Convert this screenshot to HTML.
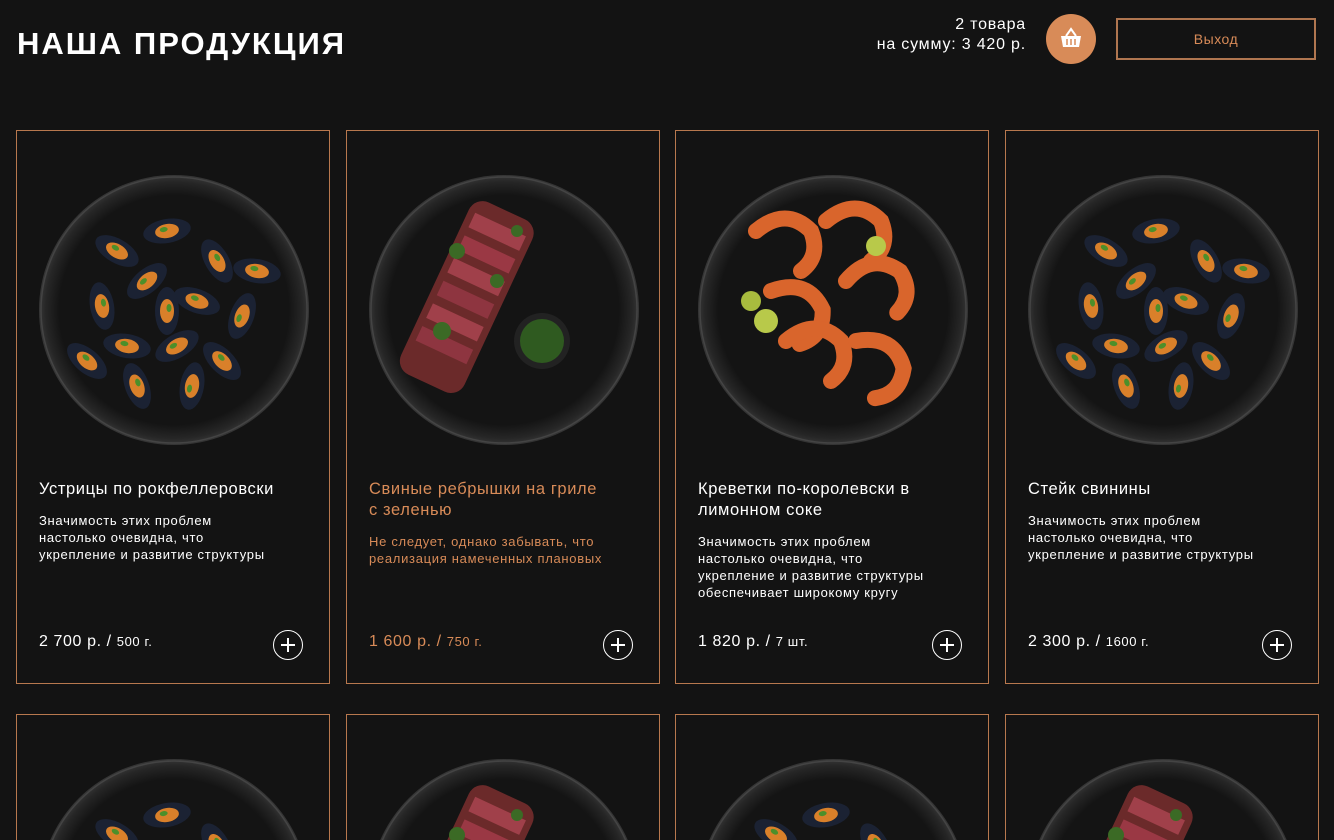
<!DOCTYPE html>
<html style="width:1334px;height:840px;overflow:hidden"><head><meta charset="utf-8">
<style>
*{margin:0;padding:0;box-sizing:border-box}
body{width:1334px;height:840px;background:#131313;overflow:hidden;font-family:"Liberation Sans","DejaVu Sans",sans-serif;color:#fff;position:relative}
h1{position:absolute;left:17px;top:26px;font-size:31px;font-weight:bold;letter-spacing:2px}
.sum{position:absolute;right:308px;top:15px;text-align:right;font-size:16px;line-height:20px;letter-spacing:0.8px}
.cart{position:absolute;left:1046px;top:14px;width:50px;height:50px;border-radius:50%;background:#d88b58}
.exit{position:absolute;left:1116px;top:18px;width:200px;height:42px;border:2px solid #b07650;color:#d88b58;font-size:14px;text-align:center;line-height:38px;letter-spacing:0.5px}
.card{position:absolute;width:314px;height:554px;border:1px solid #b8784e;background:#131313;overflow:hidden}
.card svg.p{position:absolute;left:0;top:0}
.t{position:absolute;left:22px;top:348px;width:290px;font-size:16.5px;line-height:21px;letter-spacing:0.6px;white-space:nowrap}
.d{position:absolute;left:22px;width:290px;font-size:13px;line-height:17px;top:381px;letter-spacing:0.7px;white-space:nowrap}
.pr{position:absolute;left:22px;top:502px;font-size:16px;letter-spacing:0.6px}
.pr small{font-size:13px}
.plus{position:absolute;left:256px;top:499px;width:30px;height:30px;border:1.5px solid #fff;border-radius:50%}
.plus:before,.plus:after{content:"";position:absolute;background:#fff;left:50%;top:50%;transform:translate(-50%,-50%)}
.plus:before{width:14px;height:2px}.plus:after{width:2px;height:14px}
.o{color:#d88b58}
.r2{height:126px;border-bottom:none}
</style></head><body>
<svg width="0" height="0" style="position:absolute">
<defs>
<radialGradient id="pl" cx="50%" cy="50%" r="50%"><stop offset="0.85" stop-color="#141414"/><stop offset="0.95" stop-color="#262626"/><stop offset="1" stop-color="#363636"/></radialGradient>
<g id="plate"><circle cx="157" cy="179" r="135" fill="url(#pl)"/><circle cx="157" cy="179" r="133" fill="none" stroke="#444" stroke-width="1.5"/></g>
<g id="mus"><ellipse rx="24" ry="12" fill="#1b2233"/><ellipse rx="12" ry="7" fill="#d9802a"/><ellipse cx="-3" cy="-2" rx="4" ry="2.5" fill="#4c8f2a"/></g>
<g id="mussels"><use href="#plate"/>
<use href="#mus" transform="translate(100,120) rotate(30)"/><use href="#mus" transform="translate(150,100) rotate(-10)"/><use href="#mus" transform="translate(200,130) rotate(60)"/>
<use href="#mus" transform="translate(85,175) rotate(80)"/><use href="#mus" transform="translate(130,150) rotate(-40)"/><use href="#mus" transform="translate(180,170) rotate(20)"/>
<use href="#mus" transform="translate(225,185) rotate(-70)"/><use href="#mus" transform="translate(110,215) rotate(10)"/><use href="#mus" transform="translate(160,215) rotate(-30)"/>
<use href="#mus" transform="translate(205,230) rotate(45)"/><use href="#mus" transform="translate(120,255) rotate(70)"/><use href="#mus" transform="translate(175,255) rotate(-80)"/>
<use href="#mus" transform="translate(70,230) rotate(40)"/><use href="#mus" transform="translate(240,140) rotate(10)"/><use href="#mus" transform="translate(150,180) rotate(90)"/>
</g>
<g id="steak"><use href="#plate"/>
<g transform="rotate(25 140 170)"><rect x="85" y="80" width="70" height="190" rx="15" fill="#6b2a2a"/><rect x="92" y="95" width="56" height="16" fill="#a0404a"/><rect x="92" y="120" width="56" height="16" fill="#9a3844"/><rect x="92" y="145" width="56" height="16" fill="#a0404a"/><rect x="92" y="170" width="56" height="16" fill="#8e3540"/><rect x="92" y="195" width="56" height="16" fill="#a0404a"/><rect x="92" y="220" width="56" height="16" fill="#8e3540"/></g>
<circle cx="110" cy="120" r="8" fill="#3b6a25"/><circle cx="150" cy="150" r="7" fill="#3b6a25"/><circle cx="95" cy="200" r="9" fill="#3b6a25"/><circle cx="170" cy="100" r="6" fill="#3b6a25"/>
<circle cx="195" cy="210" r="28" fill="#222"/><circle cx="195" cy="210" r="22" fill="#2f5a20"/></g>
<g id="shrimpx"><path d="M0 0 q30 -25 55 0 q10 25 -10 40" fill="none" stroke="#d9652c" stroke-width="16" stroke-linecap="round"/></g>
<g id="shrimp"><use href="#plate"/>
<use href="#shrimpx" transform="translate(80,100)"/><use href="#shrimpx" transform="translate(150,90)"/><use href="#shrimpx" transform="translate(95,160) rotate(20)"/>
<use href="#shrimpx" transform="translate(170,150) rotate(-10)"/><use href="#shrimpx" transform="translate(110,210)"/><use href="#shrimpx" transform="translate(180,210) rotate(30)"/>
<circle cx="90" cy="190" r="12" fill="#b8c94a"/><circle cx="200" cy="115" r="10" fill="#b8c94a"/><circle cx="75" cy="170" r="10" fill="#a8bb3e"/></g>
</defs></svg>

<h1>НАША ПРОДУКЦИЯ</h1>
<div class="sum">2 товара<br>на сумму: 3 420 р.</div>
<div class="cart"><svg width="50" height="50" viewBox="0 0 50 50"><path d="M20 22 L25 15 L30 22" fill="none" stroke="#fff" stroke-width="2"/><path d="M15 22 H35 L33 33 H17 Z" fill="#fff"/><path d="M21 25 V31 M25 25 V31 M29 25 V31" stroke="#d88b58" stroke-width="1.5"/></svg></div>
<div class="exit">Выход</div>

<div class="card" style="left:16px;top:130px"><svg class="p" width="314" height="360"><use href="#mussels"/></svg>
<div class="t">Устрицы по рокфеллеровски</div><div class="d">Значимость этих проблем<br>настолько очевидна, что<br>укрепление и развитие структуры</div>
<div class="pr">2 700 р. / <small>500 г.</small></div><div class="plus"></div></div>

<div class="card o" style="left:346px;top:130px"><svg class="p" width="314" height="360"><use href="#steak"/></svg>
<div class="t">Свиные ребрышки на гриле<br>с зеленью</div><div class="d" style="top:402px">Не следует, однако забывать, что<br>реализация намеченных плановых</div>
<div class="pr">1 600 р. / <small>750 г.</small></div><div class="plus"></div></div>

<div class="card" style="left:675px;top:130px"><svg class="p" width="314" height="360"><use href="#shrimp"/></svg>
<div class="t">Креветки по-королевски в<br>лимонном соке</div><div class="d" style="top:402px">Значимость этих проблем<br>настолько очевидна, что<br>укрепление и развитие структуры<br>обеспечивает широкому кругу</div>
<div class="pr">1 820 р. / <small>7 шт.</small></div><div class="plus"></div></div>

<div class="card" style="left:1005px;top:130px"><svg class="p" width="314" height="360"><use href="#mussels"/></svg>
<div class="t">Стейк свинины</div><div class="d">Значимость этих проблем<br>настолько очевидна, что<br>укрепление и развитие структуры</div>
<div class="pr">2 300 р. / <small>1600 г.</small></div><div class="plus"></div></div>

<div class="card r2" style="left:16px;top:714px"><svg class="p" width="314" height="360"><use href="#mussels"/></svg></div>
<div class="card r2" style="left:346px;top:714px"><svg class="p" width="314" height="360"><use href="#steak"/></svg></div>
<div class="card r2" style="left:675px;top:714px"><svg class="p" width="314" height="360"><use href="#mussels"/></svg></div>
<div class="card r2" style="left:1005px;top:714px"><svg class="p" width="314" height="360"><use href="#steak"/></svg></div>
</body></html>
